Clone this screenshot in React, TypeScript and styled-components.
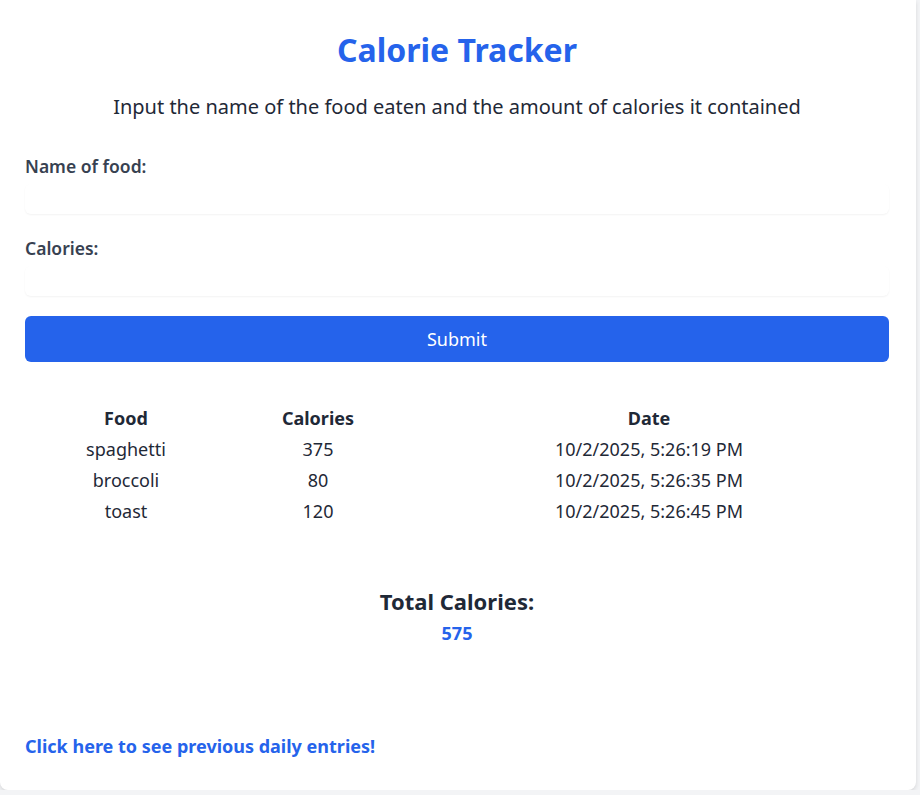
import React from "react";
import styled, { createGlobalStyle } from "styled-components";

const Global = createGlobalStyle`
  html, body { margin: 0; padding: 0; background: #f3f4f6; }
  body { font-family: "Noto Sans", "Open Sans", sans-serif; color: #1f2937; }
  * { box-sizing: border-box; }
`;

const Card = styled.div`
  width: 916px;
  min-height: 790px;
  background: #ffffff;
  border-radius: 0 0 8px 8px;
  box-shadow: 0 2px 4px rgba(0, 0, 0, 0.12);
  padding: 26px 27px 30px 25px;
  display: flex;
  flex-direction: column;
`;

const Title = styled.h1`
  margin: 0;
  text-align: center;
  color: #2563eb;
  font-size: 32px;
  font-weight: 700;
  line-height: 48px;
`;

const Subtitle = styled.p`
  margin: 19px 0 0;
  text-align: center;
  font-size: 20px;
  line-height: 28px;
  color: #1f2937;
`;

const Form = styled.form`
  margin-top: 31px;
  display: flex;
  flex-direction: column;
`;

const Label = styled.label`
  font-size: 17.5px;
  font-weight: 600;
  color: #374151;
  line-height: 28px;
`;

const Input = styled.input`
  margin: 4px 0 20px;
  height: 30px;
  border: none;
  border-radius: 6px;
  box-shadow: 0 1px 2px rgba(0, 0, 0, 0.05);
  background: #fff;
  outline: none;
`;

const Button = styled.button`
  height: 46px;
  border: none;
  border-radius: 6px;
  background: #2563eb;
  color: #fff;
  font-family: inherit;
  font-size: 18px;
`;

const Table = styled.div`
  margin-top: 42px;
  display: grid;
  grid-template-columns: 202px 182px 1fr;
  row-gap: 3px;
`;

const Cell = styled.div<{ $head?: boolean }>`
  text-align: center;
  font-size: 18px;
  line-height: 28px;
  font-weight: ${(p) => (p.$head ? 700 : 400)};
  color: #1f2937;
`;

const TotalBox = styled.div`
  margin-top: 60px;
  display: flex;
  flex-direction: column;
  align-items: center;
  gap: 2px;
`;

const TotalTitle = styled.h2`
  margin: 0;
  font-size: 22px;
  line-height: 32px;
  font-weight: 700;
  color: #1f2937;
`;

const TotalValue = styled.div`
  font-size: 18px;
  line-height: 28px;
  font-weight: 700;
  color: #2563eb;
`;

const Link = styled.a`
  margin-top: 85px;
  font-size: 18px;
  font-weight: 700;
  color: #2563eb;
  text-decoration: none;
  line-height: 28px;
`;

const rows = [
  { food: "spaghetti", cal: 375, date: "10/2/2025, 5:26:19 PM" },
  { food: "broccoli", cal: 80, date: "10/2/2025, 5:26:35 PM" },
  { food: "toast", cal: 120, date: "10/2/2025, 5:26:45 PM" },
];

export default function App() {
  return (
    <>
      <Global />
      <Card>
        <Title>Calorie Tracker</Title>
        <Subtitle>Input the name of the food eaten and the amount of calories it contained</Subtitle>
        <Form onSubmit={(e) => e.preventDefault()}>
          <Label>Name of food:</Label>
          <Input type="text" />
          <Label>Calories:</Label>
          <Input type="number" />
          <Button type="submit">Submit</Button>
        </Form>
        <Table>
          <Cell $head>Food</Cell>
          <Cell $head>Calories</Cell>
          <Cell $head>Date</Cell>
          {rows.map((r) => (
            <React.Fragment key={r.date}>
              <Cell>{r.food}</Cell>
              <Cell>{r.cal}</Cell>
              <Cell>{r.date}</Cell>
            </React.Fragment>
          ))}
        </Table>
        <TotalBox>
          <TotalTitle>Total Calories:</TotalTitle>
          <TotalValue>575</TotalValue>
        </TotalBox>
        <Link href="#">Click here to see previous daily entries!</Link>
      </Card>
    </>
  );
}
